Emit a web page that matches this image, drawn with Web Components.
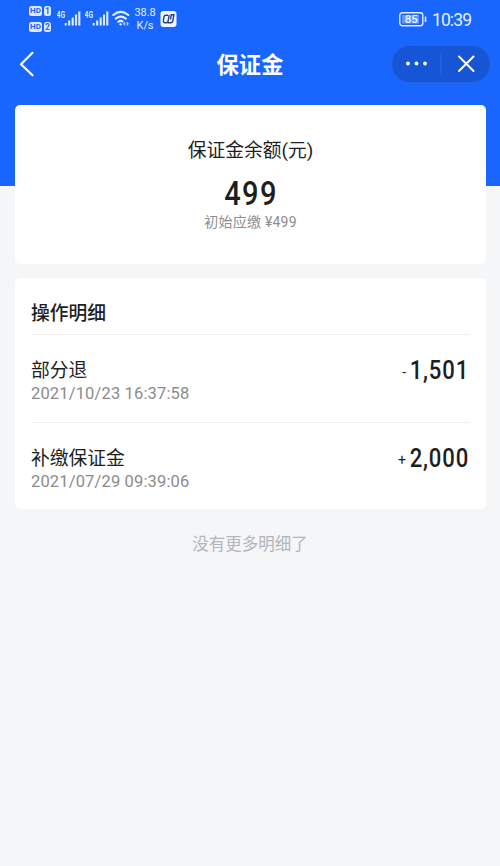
<!DOCTYPE html>
<html lang="zh-CN">
<head>
<meta charset="utf-8">
<title>保证金</title>
<style>
html,body{margin:0;height:100%}
body{background:#f4f6f8;font-family:Roboto,"Noto Sans CJK SC",sans-serif;color:#1d1e21;overflow:hidden}
</style>
</head>
<body>
<deposit-page></deposit-page>
<script>
const define = (name, html) => {
  const t = document.createElement('template');
  t.innerHTML = html;
  customElements.define(name, class extends HTMLElement {
    constructor() {
      super();
      this.attachShadow({mode: 'open'}).append(t.content.cloneNode(true));
    }
  });
};

define('signal-bars', `<style>
:host{display:block;height:19px}
svg{display:block}
</style>
<svg width="24" height="19" viewBox="0 0 24 19"><text x="-.5" y="9" font-family="Roboto" font-size="9" font-weight="700" fill="#dfeaff" textLength="8.500" lengthAdjust="spacingAndGlyphs">4G</text>
<path d="M8.700 16.500v-2.500M12.200 16.500v-5M15.700 16.500v-8M19 16.500v-11M22.300 16.500V2.500" stroke="#dfeaff" stroke-width="2.100"/></svg>`);

define('hd-badge', `<style>
:host{display:flex;gap:2px;height:10px;font:700 9px/10px Roboto,sans-serif;color:#1764fb}
span{background:#dfeaff;border-radius:2.500px;text-align:center;height:10px}
.h{width:13px;font-size:8px;letter-spacing:.2px}.n{width:7px;font-size:8.500px}
</style><span class="h">HD</span><span class="n"><slot></slot></span>`);

define('status-bar', `<style>
:host{display:flex;height:38px;box-sizing:border-box;padding:0 29px;color:#e6efff}
.hd{display:flex;flex-direction:column;gap:6px;padding-top:6px;width:28px}
signal-bars{margin-top:9px;width:24px;margin-right:4px}
.wifi{margin:10px 0 0 -1px}
.speed{margin:6px 0 0 3px;width:24px;text-align:center;font-size:11px;line-height:13px;white-space:nowrap;letter-spacing:-.1px}
.app{margin:11px 0 0 3px}
.bat{margin:12px 0 0 auto}
.time{font-size:17.500px;line-height:20px;margin:10px 0 0 5px;width:39px;white-space:nowrap;letter-spacing:-.9px}
</style>
<div class="hd"><hd-badge>1</hd-badge><hd-badge>2</hd-badge></div>
<signal-bars></signal-bars><signal-bars></signal-bars>
<svg class="wifi" width="18" height="17" viewBox="0 0 18 17" fill="none" stroke="#e6efff" stroke-width="2" stroke-linecap="round"><path d="M1.300 5Q8.800-1.200 16.300 5M3.800 8.600Q8.800 4.600 13.800 8.600M6.300 11.800Q8.500 10.200 10.500 11.400"/><circle cx="8.500" cy="14.300" r=".8" fill="#e6efff" stroke-width="1"/><path d="M12.600 12.300L11.300 13.800 12.600 15.300zM15.200 12.300L16.500 13.800 15.200 15.300z" fill="#e6efff" stroke-width=".4"/></svg>
<div class="speed">38.8<br>K/s</div>
<svg class="app" width="17" height="16" viewBox="0 0 17 16"><rect x=".5" width="16" height="16" rx="3" fill="#f2f6ff"/><path d="M8 4.200H6Q4.300 4.200 4 5.900L3.400 9.500Q3 11.800 5 11.800H6.200Q7.800 11.800 8.100 10.200L9.200 3.800M7.800 11.800H10.800Q12.500 11.800 12.800 10.100L13.900 3.800H11.300L10.500 8.500" fill="none" stroke="#263f7c" stroke-width="1.400"/></svg>
<svg class="bat" width="28" height="15" viewBox="0 0 28 15"><rect x=".8" y=".8" width="23" height="13" rx="2.500" fill="none" stroke="#dfeaff" stroke-width="1.400"/><rect x="3" y="3" width="17" height="8.600" fill="#5f96ff"/><path d="M26.500 4.500v5.500" stroke="#dfeaff" stroke-width="1.600"/><text x="12.300" y="11.200" text-anchor="middle" font-family="Roboto" font-size="11.500" font-weight="500" fill="#f2f6ff">85</text></svg>
<div class="time">10:39</div>`);

define('capsule-menu', `<style>
:host{display:block;box-sizing:border-box;width:100px;height:38px;border-radius:19px;background:#1656d6;border:1px solid #2465df}
svg{display:block}
</style><svg width="98" height="36" viewBox="0 0 98 36" fill="#fff"><circle cx="16" cy="17.500" r="1.900"/><circle cx="24.500" cy="17.500" r="1.900"/><circle cx="33" cy="17.500" r="1.900"/><path d="M49 7v22" stroke="#3069dc"/><path d="M67 10.500l14.500 14.500M81.500 10.500L67 25" stroke="#fff" stroke-width="2" stroke-linecap="round"/></svg>`);

define('nav-bar', `<style>
:host{display:grid;grid-template-columns:110px 1fr 110px;align-items:center;height:51px;color:#fff}
svg{margin-left:19px}
h1{margin:3px 0 0;text-align:center;font-size:22.300px;line-height:30px;font-weight:700}
capsule-menu{justify-self:end;margin-right:9px}
</style><svg width="17" height="28" viewBox="0 0 17 28" fill="none" stroke="#fff" stroke-width="2.200" stroke-linecap="round" stroke-linejoin="round"><path d="M13.500 2.800L2 14.300 13.500 25.300"/></svg><h1><slot></slot></h1><capsule-menu></capsule-menu>`);

define('white-card', `<style>
:host{display:block;box-sizing:border-box;background:#fff;border-radius:5px;margin:0 14px 0 15px}
</style><slot></slot>`);

define('balance-summary', `<style>
:host{display:flex;flex-direction:column;align-items:center;height:159px;box-sizing:border-box;padding-top:32px}
.l{font-size:18.800px;line-height:28px}
.v{font-size:33px;font-weight:500;line-height:36px;margin-top:11px;letter-spacing:1.600px;text-indent:1.600px;transform:scaleX(.88)}
.s{font-size:14px;line-height:20px;color:#8e8e90;white-space:pre;letter-spacing:.25px}
</style><div class="l"><slot name="label"></slot></div><div class="v"><slot name="value"></slot></div><div class="s"><slot name="note"></slot></div>`);

define('detail-row', `<style>
:host{display:flex;justify-content:space-between;border-top:1px solid #efeff1;height:88px;box-sizing:border-box;padding-top:20px}
.n{font-size:18.800px;line-height:28px;margin-top:2px}
.d{font-size:16.500px;line-height:20px;color:#8b8b8d;letter-spacing:.15px;margin-top:-1px}
.a{display:flex;line-height:30px}
.v{font-size:26px;font-weight:500;letter-spacing:1px;transform:scaleX(.85);transform-origin:right;margin-left:-11px;padding-right:1px}
.g{font-size:14px;line-height:35px;margin-right:4px}
</style><div><div class="n"><slot name="name"></slot></div><div class="d"><slot name="date"></slot></div></div><div class="a"><span class="g"><slot name="sign"></slot></span><span class="v"><slot name="amount"></slot></span></div>`);

define('detail-list', `<style>
:host{display:block;height:231px;padding:0 16px;box-sizing:border-box}
h2{margin:0;height:56px;padding-top:22px;box-sizing:border-box;font-size:18.800px;line-height:28px;font-weight:500}
</style><h2><slot name="title"></slot></h2><slot></slot>`);

define('deposit-page', `<style>
:host{display:block;height:866px;background:linear-gradient(#1966ff 186px,#f4f6f8 186px)}
nav-bar{margin-bottom:16px}
white-card + white-card{margin-top:14px}
footer{font-size:16.500px;line-height:24px;text-align:center;color:#b4b5b8;margin-top:24px}
</style>
<status-bar></status-bar>
<nav-bar>保证金</nav-bar>
<white-card><balance-summary><span slot="label">保证金余额(元)</span><span slot="value">499</span><span slot="note">初始应缴 ¥499</span></balance-summary></white-card>
<white-card><detail-list><span slot="title">操作明细</span>
<detail-row><span slot="name">部分退</span><span slot="date">2021/10/23 16:37:58</span><span slot="sign">-</span><span slot="amount">1,501</span></detail-row>
<detail-row><span slot="name">补缴保证金</span><span slot="date">2021/07/29 09:39:06</span><span slot="sign">+</span><span slot="amount">2,000</span></detail-row>
</detail-list></white-card>
<footer>没有更多明细了</footer>`);
</script>
</body>
</html>
